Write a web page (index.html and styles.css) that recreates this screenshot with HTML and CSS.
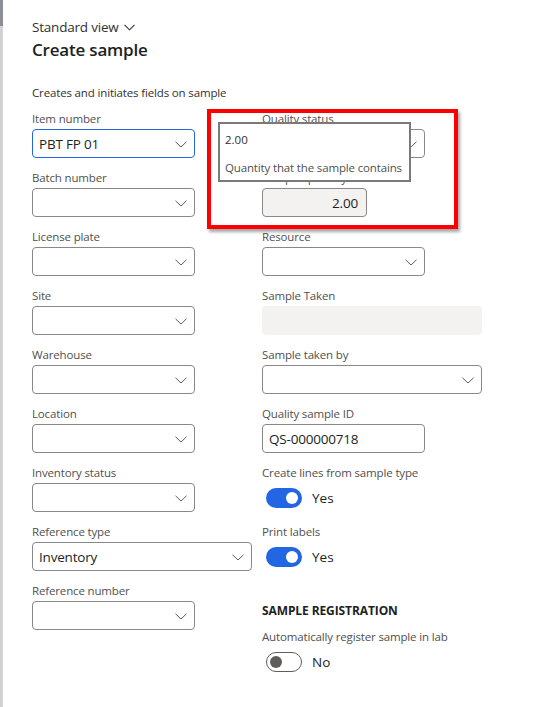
FILE: index.html
```html
<!DOCTYPE html>
<html>
<head>
<meta charset="utf-8">
<link rel="stylesheet" href="styles.css">
</head>
<body>
<div class="strip"><div class="strip-top"></div></div>
<div class="panel">
  <div class="view">Standard view <svg class="view-chev" width="11" height="7" viewBox="0 0 11 7"><path d="M0.5 0.8 L5.5 5.8 L10.5 0.8" fill="none" stroke="#323130" stroke-width="1.1"/></svg></div>
  <h1 class="title">Create sample</h1>
  <p class="desc">Creates and initiates fields on sample</p>

  <div class="columns">
    <div class="col col-left">
      <div class="field"><label>Item number</label><div class="input focus"><span class="val">PBT FP 01</span><svg class="chev" width="12" height="7" viewBox="0 0 12 7"><path d="M0.5 0.8 L6 6 L11.5 0.8" fill="none" stroke="#605e5c" stroke-width="1"/></svg></div></div>
      <div class="field"><label>Batch number</label><div class="input"><span class="val"></span><svg class="chev" width="12" height="7" viewBox="0 0 12 7"><path d="M0.5 0.8 L6 6 L11.5 0.8" fill="none" stroke="#605e5c" stroke-width="1"/></svg></div></div>
      <div class="field"><label>License plate</label><div class="input"><span class="val"></span><svg class="chev" width="12" height="7" viewBox="0 0 12 7"><path d="M0.5 0.8 L6 6 L11.5 0.8" fill="none" stroke="#605e5c" stroke-width="1"/></svg></div></div>
      <div class="field"><label>Site</label><div class="input"><span class="val"></span><svg class="chev" width="12" height="7" viewBox="0 0 12 7"><path d="M0.5 0.8 L6 6 L11.5 0.8" fill="none" stroke="#605e5c" stroke-width="1"/></svg></div></div>
      <div class="field"><label>Warehouse</label><div class="input"><span class="val"></span><svg class="chev" width="12" height="7" viewBox="0 0 12 7"><path d="M0.5 0.8 L6 6 L11.5 0.8" fill="none" stroke="#605e5c" stroke-width="1"/></svg></div></div>
      <div class="field"><label>Location</label><div class="input"><span class="val"></span><svg class="chev" width="12" height="7" viewBox="0 0 12 7"><path d="M0.5 0.8 L6 6 L11.5 0.8" fill="none" stroke="#605e5c" stroke-width="1"/></svg></div></div>
      <div class="field"><label>Inventory status</label><div class="input"><span class="val"></span><svg class="chev" width="12" height="7" viewBox="0 0 12 7"><path d="M0.5 0.8 L6 6 L11.5 0.8" fill="none" stroke="#605e5c" stroke-width="1"/></svg></div></div>
      <div class="field"><label>Reference type</label><div class="input wide"><span class="val">Inventory</span><svg class="chev" width="12" height="7" viewBox="0 0 12 7"><path d="M0.5 0.8 L6 6 L11.5 0.8" fill="none" stroke="#605e5c" stroke-width="1"/></svg></div></div>
      <div class="field"><label>Reference number</label><div class="input"><span class="val"></span><svg class="chev" width="12" height="7" viewBox="0 0 12 7"><path d="M0.5 0.8 L6 6 L11.5 0.8" fill="none" stroke="#605e5c" stroke-width="1"/></svg></div></div>
    </div>

    <div class="col col-right">
      <div class="field highlight-host">
        <label>Quality status</label><div class="input"><span class="val"></span><svg class="chev" width="12" height="7" viewBox="0 0 12 7"><path d="M0.5 0.8 L6 6 L11.5 0.8" fill="none" stroke="#605e5c" stroke-width="1"/></svg></div>
        <div class="redbox"></div>
        <div class="tooltip"><div class="tip-val">2.00</div><div class="tip-text">Quantity that the sample contains</div></div>
      </div>
      <div class="field"><label class="hidden-label">Sample quantity</label><div class="input qty"><span class="val num">2.00</span></div></div>
      <div class="field"><label>Resource</label><div class="input"><span class="val"></span><svg class="chev" width="12" height="7" viewBox="0 0 12 7"><path d="M0.5 0.8 L6 6 L11.5 0.8" fill="none" stroke="#605e5c" stroke-width="1"/></svg></div></div>
      <div class="field"><label>Sample Taken</label><div class="input readonly xwide"></div></div>
      <div class="field"><label>Sample taken by</label><div class="input xwide"><span class="val"></span><svg class="chev" width="12" height="7" viewBox="0 0 12 7"><path d="M0.5 0.8 L6 6 L11.5 0.8" fill="none" stroke="#605e5c" stroke-width="1"/></svg></div></div>
      <div class="field"><label>Quality sample ID</label><div class="input"><span class="val">QS-000000718</span></div></div>
      <div class="field"><label>Create lines from sample type</label><div class="toggle-row"><span class="toggle on"><span class="knob"></span></span><span class="toggle-text">Yes</span></div></div>
      <div class="field"><label>Print labels</label><div class="toggle-row"><span class="toggle on"><span class="knob"></span></span><span class="toggle-text">Yes</span></div></div>
      <div class="section">SAMPLE REGISTRATION</div>
      <div class="field"><label>Automatically register sample in lab</label><div class="toggle-row"><span class="toggle off"><span class="knob"></span></span><span class="toggle-text">No</span></div></div>
    </div>
  </div>
</div>
</body>
</html>
```

FILE: styles.css
```css
* { box-sizing: border-box; }
html, body { margin: 0; padding: 0; background: #ffffff; }
body {
  font-family: "Open Sans", "Noto Sans", sans-serif;
  color: #323130;
  display: flex;
  min-height: 707px;
}
.strip {
  width: 3px;
  background: #d2d2d2;
  flex: none;
}
.strip-top {
  height: 26px;
  background: #8a8f98;
}
.panel {
  padding: 17px 0 0 29px;
  flex: 1;
}
.view {
  font-size: 13.5px;
  line-height: 20px;
  color: #323130;
  letter-spacing: -0.2px;
  display: flex;
  align-items: center;
  gap: 5px;
}
.title {
  margin: 1px 0 0;
  font-size: 17px;
  line-height: 24px;
  font-weight: 600;
  letter-spacing: -0.2px;
  color: #201f1e;
}
.desc {
  margin: 23px 0 0;
  font-size: 11.5px;
  line-height: 16px;
  letter-spacing: -0.15px;
  color: #323130;
}
.columns {
  display: flex;
  margin-top: 10px;
}
.col {
  display: flex;
  flex-direction: column;
  gap: 12px;
}
.col-left { width: 230px; flex: none; }
.col-right { flex: 1; }
.field {
  display: flex;
  flex-direction: column;
  gap: 2px;
}
.field label {
  font-size: 11.5px;
  line-height: 16px;
  color: #505050;
  letter-spacing: -0.15px;
}
.input {
  width: 163px;
  height: 29px;
  border: 1px solid #8a8886;
  border-radius: 4px;
  display: flex;
  align-items: center;
  padding: 0 7px 0 6px;
  background: #fff;
}
.input.focus { border-color: #2266e3; }
.input.wide { width: 220px; }
.input.xwide { width: 220px; }
.input.qty { width: 105px; background: #f3f2f1; }
.input.readonly { background: #f3f2f1; border-color: #f3f2f1; }
.val {
  flex: 1;
  font-size: 13.5px;
  letter-spacing: -0.2px;
  color: #201f1e;
}
.val.num { text-align: right; padding-right: 1px; }
.chev { flex: none; margin-top: 1px; }
.toggle-row {
  height: 29px;
  display: flex;
  align-items: center;
  gap: 10px;
  padding-left: 4px;
}
.toggle {
  width: 36px;
  height: 20px;
  border-radius: 10px;
  display: flex;
  align-items: center;
  padding: 0 4px;
}
.toggle.on { background: #2266e3; justify-content: flex-end; }
.toggle.off { border: 1px solid #605e5c; background: #fff; padding: 0 3px; }
.knob {
  width: 12px;
  height: 12px;
  border-radius: 50%;
}
.toggle.on .knob { background: #fff; }
.toggle.off .knob { background: #605e5c; }
.toggle-text {
  font-size: 13.5px;
  color: #201f1e;
}
.section {
  margin-top: 20px;
  margin-bottom: -2px;
  font-size: 12px;
  line-height: 16px;
  font-weight: 700;
  color: #201f1e;
  letter-spacing: -0.1px;
}
.highlight-host { position: relative; }
.redbox {
  position: absolute;
  left: -55px;
  top: -2px;
  width: 251px;
  height: 120px;
  border: 4px solid #ff0000;
  box-shadow: 2px 3px 3px rgba(0,0,0,0.35);
  pointer-events: none;
  z-index: 2;
}
.tooltip {
  position: absolute;
  left: -44px;
  top: 11px;
  width: 193px;
  height: 60px;
  border: 2px solid #7a7a7a;
  background: #fff;
  padding: 8px 0 0 5px;
  z-index: 3;
}
.tip-val {
  font-size: 11.5px;
  line-height: 16px;
  color: #323130;
}
.tip-text {
  margin-top: 12px;
  font-size: 11.5px;
  line-height: 16px;
  color: #505050;
  letter-spacing: -0.15px;
}
.hidden-label { visibility: visible; }
```
